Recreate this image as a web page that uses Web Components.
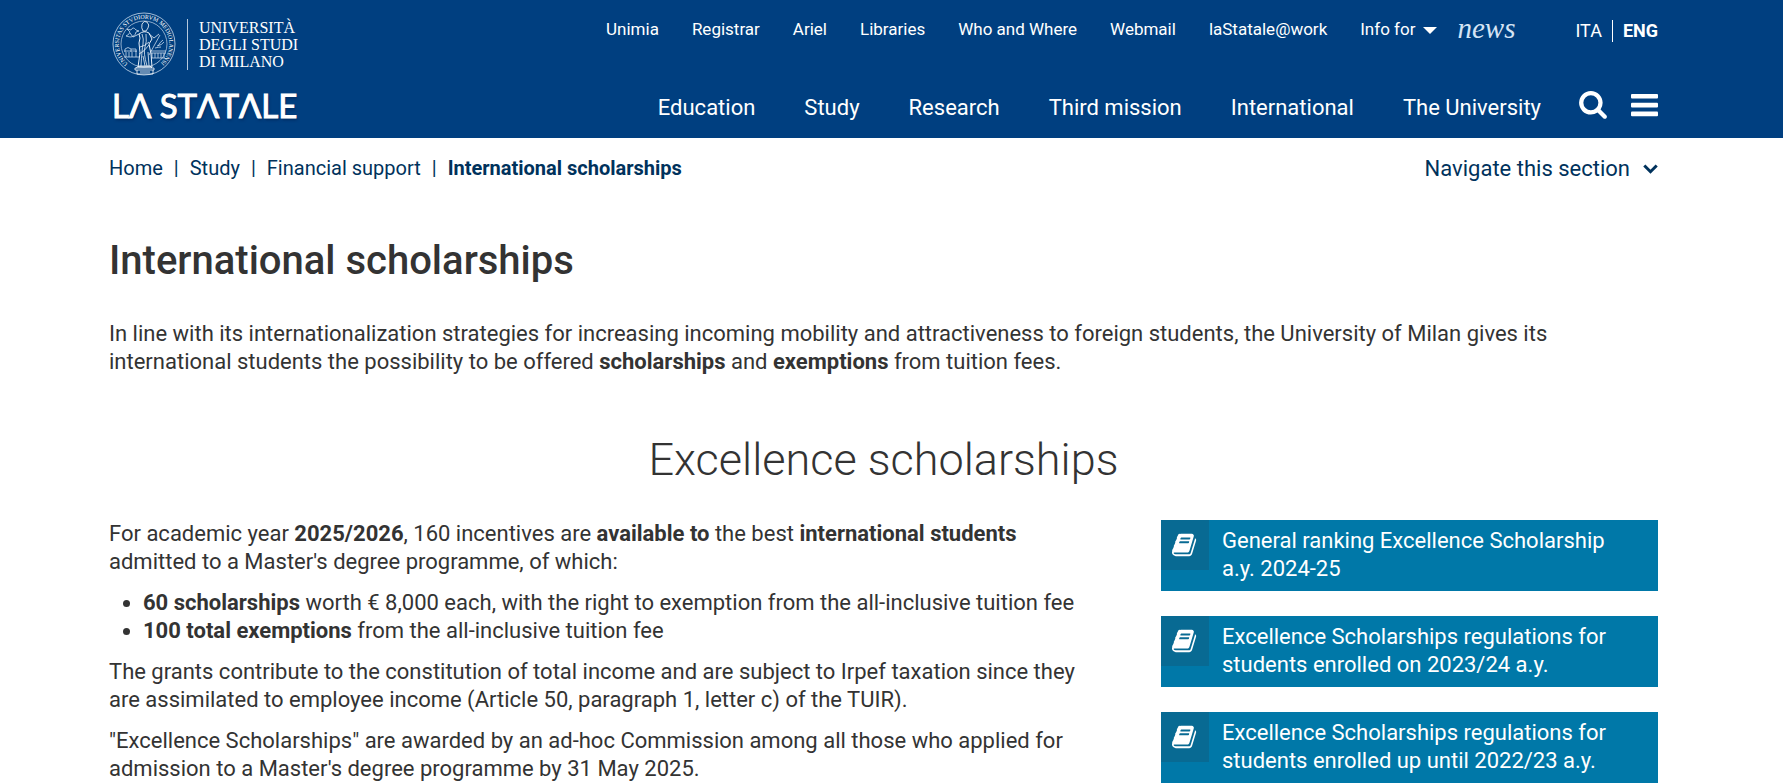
<!DOCTYPE html>
<html lang="en">
<head>
<meta charset="utf-8">
<title>International scholarships | Università degli Studi di Milano</title>
<meta name="viewport" content="width=device-width, initial-scale=1">
<style>
  :root {
    --blue: #003f80;
    --navy: #00325c;
    --teal: #0078a8;
    --teal-dark: #086a93;
    --ink: #333;
    --gutter-left: 109px;
    --gutter-right: 125px;
  }
  body {
    margin: 0;
    background: #fff;
    color: var(--ink);
    font: 22px/28px Roboto, "Liberation Sans", sans-serif;
  }
  page-article p { margin: 0; }
</style>
</head>
<body>
<site-header></site-header>
<section-bar></section-bar>
<page-article>
  <span slot="title">International scholarships</span>
  <p>In line with its internationalization strategies for increasing incoming mobility and attractiveness to foreign students, the University of Milan gives its international students the possibility to be offered <strong>scholarships</strong> and <strong>exemptions</strong> from tuition fees.</p>
</page-article>
<split-section>
  <span slot="heading">Excellence scholarships</span>
  <rich-text></rich-text>
  <resource-link slot="aside">General ranking Excellence Scholarship a.y. 2024-25</resource-link>
  <resource-link slot="aside">Excellence Scholarships regulations for students enrolled on 2023/24 a.y.</resource-link>
  <resource-link slot="aside">Excellence Scholarships regulations for students enrolled up until 2022/23 a.y.</resource-link>
</split-section>

<template id="t-brand">
  <style>
    :host { display: block; color: #fff; }
    a { display: block; color: inherit; text-decoration: none; }
    .top { display: flex; align-items: center; gap: 11px; }
    svg { display: block; width: 64px; height: 64px; overflow: visible; }
    .name { border-left: 1px solid #b4c8dd; padding: 0 0 0 11px; font: 16px/17px "Liberation Serif", serif; color: #fff; }
    .name span { display: block; }
    .word { margin-top: 9px; font: 33px/40px Lato, sans-serif; -webkit-text-stroke: 1px #fff; text-shadow: 1px 2px 3px rgba(0, 20, 60, .5); white-space: nowrap; }
  </style>
  <a href="#" aria-label="Università degli Studi di Milano, La Statale">
    <div class="top">
      <svg viewBox="0 0 64 64" fill="none" stroke="#c9daec" stroke-width=".8" aria-hidden="true">
        <defs><path id="ring" d="M16.100 51.500 A25.200 25.200 0 1 1 47.900 51.500"/></defs>
        <circle cx="32" cy="32" r="31"/>
        <circle cx="32" cy="32" r="23" stroke-width=".7"/>
        <text font-family="Liberation Serif" font-size="6" fill="#fff" stroke="none"><textPath href="#ring" startOffset="0">UNIVERSITAS STVDIORVM MEDIOLANENSIS</textPath></text>
        <path d="M12 39h13M12 45h15M39 39h15M39 41h15M39 46h14M13 40v-3q3-3 6 0v3M19 37h5v3M14 40v5M17 40v5M20 40v5M24 39v6M40 41v5M43 41v5M46 41v5M49 41v5M52 41v5"/>
        <path d="M30 12q2-4 5-2q3 3 1 6l-2 3h-3q-2-3-1-7z" stroke="#fff"/>
        <path d="M27 22q5-4 10-1l3 6-3 5 2 10 1 13H26l2-14-1-10 1-5z" stroke="#e6eff8" stroke-width="1"/>
        <path d="M27 22l-6 3-3-4M37 22l5 4 5-4M30 22q2 5 1 10t-2 22M34 22q1 8-1 13t2 19M28 35q5-1 9-5M27 42q5-2 10-9M36 40l1 14M31 44l2 10" stroke="#e6eff8"/>
        <path d="M48 23L37 43M51 28q-3 2-5 6M45 34q5-1 7-4M43 36q4-1 6-1"/>
        <path d="M14 24q3-1 4-4l-3-3 4 1q2-4 5 0l3 1-3 1q-1 5-6 5z"/>
        <path d="M23 56h19v2H23zM25 58v4h16v-4M24 56l3-2h11l2 2M28 60h10" stroke="#fff"/>
      </svg>
      <div class="name"><span>UNIVERSITÀ</span><span>DEGLI STUDI</span><span>DI MILANO</span></div>
    </div>
    <div class="word">LΛ STΛTΛLE</div>
  </a>
</template>

<template id="t-header">
  <style>
    :host { display: block; background: var(--blue); color: #fff; }
    .wrap { display: flex; justify-content: space-between; padding: 12px var(--gutter-right) 0 var(--gutter-left); }
    brand-mark { padding: 0 0 13px 3px; }
    .menus { display: flex; flex-direction: column; justify-content: space-between; align-items: flex-end; padding: 6px 0 16px; }
    .row, ul { display: flex; }
    ul { list-style: none; margin: 0; padding: 0; white-space: nowrap; }
    a, button { color: inherit; text-decoration: none; font: inherit; background: none; border: 0; padding: 0; display: block; cursor: pointer; }
    .small { font-size: 17px; line-height: 22px; }
    .small ul { gap: 33px; }
    .info { display: flex; align-items: center; gap: 8px; }
    .info i { border: 7px solid transparent; border-top-color: #fff; border-bottom: 0; margin-top: 3px; }
    .news { margin-left: 20px; font: italic 29px/20px "Liberation Serif", serif; color: #d5e4f5; }
    .small .lang { margin-left: 60px; gap: 0; padding-top: 2px; font-size: 18px; }
    .lang li + li { border-left: 1px solid #fff; margin-left: 10px; padding-left: 10px; font-weight: 700; }
    .main ul { gap: 49px; }
    .main { align-items: flex-end; }
    .tools { display: flex; align-items: center; gap: 23px; margin-left: 37px; }
    svg { display: block; fill: #fff; }
  </style>
  <header class="wrap">
    <brand-mark></brand-mark>
    <div class="menus">
      <div class="row small">
        <nav aria-label="Services"><ul>
          <li><a href="#">Unimia</a></li><li><a href="#">Registrar</a></li><li><a href="#">Ariel</a></li><li><a href="#">Libraries</a></li><li><a href="#">Who and Where</a></li><li><a href="#">Webmail</a></li><li><a href="#">laStatale@work</a></li>
          <li><button class="info" type="button">Info for<i></i></button></li>
        </ul></nav>
        <a class="news" href="#">news</a>
        <ul class="lang"><li><a href="#">ITA</a></li><li><a href="#">ENG</a></li></ul>
      </div>
      <div class="row main">
        <nav aria-label="Main"><ul>
          <li><a href="#">Education</a></li><li><a href="#">Study</a></li><li><a href="#">Research</a></li><li><a href="#">Third mission</a></li><li><a href="#">International</a></li><li><a href="#">The University</a></li>
        </ul></nav>
        <div class="tools">
          <button type="button" aria-label="Search"><svg width="30" height="32" viewBox="0 128 1792 1792"><path d="M1216 832q0-185-131.500-316.500t-316.500-131.500-316.500 131.500-131.500 316.500 131.500 316.500 316.500 131.500 316.500-131.500 131.500-316.500zm512 832q0 52-38 90t-90 38q-54 0-90-38l-343-342q-179 124-399 124-143 0-273.500-55.500t-225-150-150-225-55.500-273.500 55.500-273.500 150-225 225-150 273.500-55.500 273.500 55.500 225 150 150 225 55.500 273.500q0 220-124 399l343 343q37 37 37 90z"/></svg></button>
          <button type="button" aria-label="Menu"><svg width="27" height="32" viewBox="0 0 27 32"><rect y="4" width="27" height="4.600" rx="1"/><rect y="12.800" width="27" height="4.600" rx="1"/><rect y="21.600" width="27" height="4.600" rx="1"/></svg></button>
        </div>
      </div>
    </div>
  </header>
</template>

<template id="t-bar">
  <style>
    :host { display: flex; justify-content: space-between; padding: 16px var(--gutter-right) 0 var(--gutter-left); color: var(--navy); }
    ol { display: flex; margin: 0; padding: 0; list-style: none; font-size: 20px; }
    li + li::before { content: "|"; margin: 0 11px; }
    li[aria-current] { font-weight: 700; }
    li[aria-current]::before { font-weight: 400; }
    a { color: inherit; text-decoration: none; }
    button { display: flex; align-items: center; gap: 13px; padding: 1px 0 0; border: 0; background: none; color: inherit; font: inherit; cursor: pointer; }
    svg { display: block; }
  </style>
  <nav aria-label="Breadcrumb"><ol>
    <li><a href="#">Home</a></li><li><a href="#">Study</a></li><li><a href="#">Financial support</a></li><li aria-current="page">International scholarships</li>
  </ol></nav>
  <button type="button">Navigate this section<svg width="15" height="10" viewBox="0 0 15 10" fill="none" stroke="currentColor" stroke-width="3"><path d="M1.300 1.500L7.500 7.700 13.700 1.500"/></svg></button>
</template>

<template id="t-article">
  <style>
    :host { display: block; padding: 54px var(--gutter-right) 0 var(--gutter-left); }
    h1 { margin: 0 0 35px; font-size: 40px; line-height: 48px; font-weight: 500; }
  </style>
  <h1><slot name="title"></slot></h1>
  <slot></slot>
</template>

<template id="t-split">
  <style>
    :host { display: block; padding: 57px var(--gutter-right) 0 var(--gutter-left); }
    h2 { margin: 0 0 33px; font-size: 45px; line-height: 54px; font-weight: 300; text-align: center; }
    .cols { display: grid; grid-template-columns: minmax(0, 2fr) minmax(0, 1fr); gap: 58px; align-items: start; }
    aside { display: grid; gap: 25px; }
  </style>
  <h2><slot name="heading"></slot></h2>
  <div class="cols"><div><slot></slot></div><aside><slot name="aside"></slot></aside></div>
</template>

<template id="t-rich">
  <style>
    :host { display: block; }
    p, ul { margin: 0 0 13px; }
    :last-child { margin-bottom: 0; }
    ul { padding-left: 34px; }
  </style>
  <p>For academic year <strong>2025/2026</strong>, 160 incentives are <strong>available to</strong> the best <strong>international students</strong> admitted to a Master's degree programme, of which:</p>
  <ul>
    <li><strong>60 scholarships</strong> worth € 8,000 each, with the right to exemption from the all-inclusive tuition fee</li>
    <li><strong>100 total exemptions</strong> from the all-inclusive tuition fee</li>
  </ul>
  <p>The grants contribute to the constitution of total income and are subject to Irpef taxation since they are assimilated to employee income (Article 50, paragraph 1, letter c) of the TUIR).</p>
  <p>"Excellence Scholarships" are awarded by an ad-hoc Commission among all those who applied for admission to a Master's degree programme by 31 May 2025.</p>
</template>

<template id="t-resource">
  <style>
    :host { display: block; }
    a { display: flex; align-items: flex-start; background: var(--teal); color: #fff; text-decoration: none; }
    .icon { flex: none; display: grid; place-items: center; width: 48px; height: 50px; background: var(--teal-dark); }
    svg { display: block; width: 26px; height: 26px; fill: #fff; }
    .label { padding: 7px 32px 8px 13px; }
  </style>
  <a href="#"><span class="icon"><svg viewBox="0 0 1792 1792" aria-hidden="true"><path d="M1639 478q40 57 18 129l-275 906q-19 64-76.500 107.500t-122.500 43.500h-923q-77 0-148.500-53.500t-99.500-131.500q-24-67-2-127 0-4 3-27t4-37q1-8-3-21.500t-3-19.500q2-11 8-21t16.500-23.500 16.500-23.500q23-38 45-91.500t30-91.500q3-10 .5-30t-.5-28q3-11 17-28t17-23q21-36 42-92t25-90q1-9-2.500-32t.5-28q4-13 22-30.500t22-22.500q19-26 42.500-84.500t27.500-96.500q1-8-3-25.500t-2-26.500q2-8 9-18t18-23 17-21q8-12 16.500-30.500t15-35 16-36 19.500-32 26.500-23.500 36-11.500 47.500 5.500l-1 3q38-9 51-9h761q74 0 114 56t18 130l-274 906q-36 119-71.500 153.500t-128.500 34.500h-869q-27 0-38 15-11 16-1 43 24 70 144 70h923q29 0 56-15.500t35-41.500l300-987q7-22 5-57 38 15 59 43zm-1064 2q-4 13 2 22.500t20 9.500h608q13 0 25.500-9.500t16.500-22.500l21-64q4-13-2-22.500t-20-9.500h-608q-13 0-25.500 9.500t-16.500 22.500zm-83 256q-4 13 2 22.500t20 9.500h608q13 0 25.500-9.500t16.500-22.500l21-64q4-13-2-22.500t-20-9.500h-608q-13 0-25.500 9.500t-16.500 22.500z"/></svg></span><span class="label"><slot></slot></span></a>
</template>

<script>
  const define = (name, templateId) => customElements.define(name, class extends HTMLElement {
    constructor() {
      super();
      this.attachShadow({ mode: "open" }).append(document.getElementById(templateId).content.cloneNode(true));
    }
  });
  define("brand-mark", "t-brand");
  define("site-header", "t-header");
  define("section-bar", "t-bar");
  define("page-article", "t-article");
  define("split-section", "t-split");
  define("rich-text", "t-rich");
  define("resource-link", "t-resource");
</script>
</body>
</html>
